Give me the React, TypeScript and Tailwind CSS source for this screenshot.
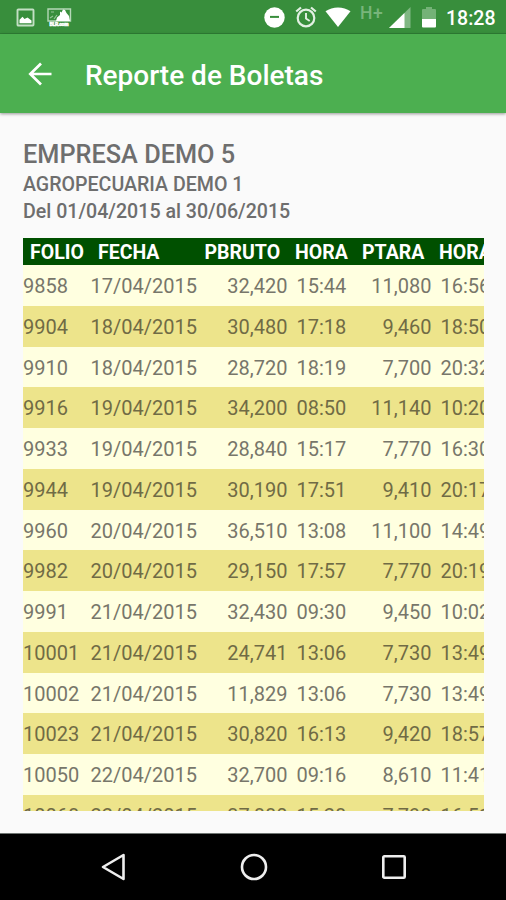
import type { ReactNode } from "react";

type Row = {
  folio: string;
  fecha: string;
  bruto: string;
  horaBruto: string;
  tara: string;
  horaTara: string;
};

const rows: Row[] = [
  { folio: "9858", fecha: "17/04/2015", bruto: "32,420", horaBruto: "15:44", tara: "11,080", horaTara: "16:56" },
  { folio: "9904", fecha: "18/04/2015", bruto: "30,480", horaBruto: "17:18", tara: "9,460", horaTara: "18:50" },
  { folio: "9910", fecha: "18/04/2015", bruto: "28,720", horaBruto: "18:19", tara: "7,700", horaTara: "20:32" },
  { folio: "9916", fecha: "19/04/2015", bruto: "34,200", horaBruto: "08:50", tara: "11,140", horaTara: "10:20" },
  { folio: "9933", fecha: "19/04/2015", bruto: "28,840", horaBruto: "15:17", tara: "7,770", horaTara: "16:30" },
  { folio: "9944", fecha: "19/04/2015", bruto: "30,190", horaBruto: "17:51", tara: "9,410", horaTara: "20:17" },
  { folio: "9960", fecha: "20/04/2015", bruto: "36,510", horaBruto: "13:08", tara: "11,100", horaTara: "14:49" },
  { folio: "9982", fecha: "20/04/2015", bruto: "29,150", horaBruto: "17:57", tara: "7,770", horaTara: "20:19" },
  { folio: "9991", fecha: "21/04/2015", bruto: "32,430", horaBruto: "09:30", tara: "9,450", horaTara: "10:02" },
  { folio: "10001", fecha: "21/04/2015", bruto: "24,741", horaBruto: "13:06", tara: "7,730", horaTara: "13:49" },
  { folio: "10002", fecha: "21/04/2015", bruto: "11,829", horaBruto: "13:06", tara: "7,730", horaTara: "13:49" },
  { folio: "10023", fecha: "21/04/2015", bruto: "30,820", horaBruto: "16:13", tara: "9,420", horaTara: "18:57" },
  { folio: "10050", fecha: "22/04/2015", bruto: "32,700", horaBruto: "09:16", tara: "8,610", horaTara: "11:41" },
  { folio: "10068", fecha: "22/04/2015", bruto: "37,880", horaBruto: "15:28", tara: "7,790", horaTara: "16:51" },
];

function Icon({ className, box, children }: { className: string; box: string; children: ReactNode }) {
  return (
    <svg className={className} viewBox={box} fill="none" aria-hidden="true">
      {children}
    </svg>
  );
}

function StatusBar() {
  return (
    <div className="flex h-[34px] shrink-0 items-start border-b border-[#2f7f35] bg-[#388e3c] text-white">
      {/* notifications */}
      <Icon className="ml-4 mt-2 h-[19px] w-[19px] shrink-0" box="0 0 19 19">
        <rect x="1.5" y="1.5" width="16" height="16" rx="0.8" stroke="#c3dfc4" strokeWidth="1.9" />
        <path d="M3.5 15.3v-3.5l3-3 2 2.200 3-1.500 4 3v2.800z" fill="#fff" />
      </Icon>
      <Icon className="ml-3 mt-2 h-5 w-[25px] shrink-0" box="0 0 25 20">
        <path d="M1 1h22.500v12H1z" stroke="#b5d8b7" strokeWidth="1.4" />
        <path d="M4 4h3M3 10l3-2M7 11l3-4" stroke="#94c496" strokeWidth="1.2" />
        <path d="M9 13l1-3.500 3-2.500V3.500l1.500 1L16 1.500l2 .5 1.500 3L22 8l1 5z" fill="#fff" />
        <text x="2.5" y="18.300" fontSize="5" fontWeight="900" fill="#fff" stroke="#fff" strokeWidth="0.5" textLength="19">
          BLR.com
        </text>
      </Icon>
      <div className="flex-1" />
      {/* do not disturb, alarm, wifi */}
      <Icon className="mt-[7px] h-[21px] w-[21px] shrink-0" box="0 0 21 21">
        <circle cx="10.5" cy="10.5" r="10.2" fill="#fff" />
        <path d="M6 9.900h9" stroke="#388e3c" strokeWidth="2" />
      </Icon>
      <Icon className="ml-[10px] mt-[5px] h-[23px] w-[22px] shrink-0" box="0 0 22 23">
        <circle cx="11" cy="13" r="8.300" stroke="#e2f0e3" strokeWidth="2.2" />
        <path d="M11 8v5.500l3.700 2.500" stroke="#e2f0e3" strokeWidth="1.900" />
        <path d="M1.200 6.500L6 2.500M20.800 6.500L16 2.500" stroke="#e2f0e3" strokeWidth="2.200" />
      </Icon>
      <Icon className="ml-[8px] mt-[7px] h-5 w-[26px] shrink-0" box="0 0 26 20">
        <path d="M.5 4.300C7.500-.9 18.500-.9 25.500 4.300L13 20z" fill="#fff" />
      </Icon>
      <span className="ml-[9px] mt-[4px] w-6 text-[17.500px] font-medium leading-[18px] tracking-[0.5px] text-[#78b57b]">H+</span>
      <Icon className="ml-[5px] mt-[7px] h-[21px] w-[22px] shrink-0" box="0 0 22 21">
        <path d="M21.500 0v21H0z" fill="#80b883" />
        <path d="M15.500 5.900V21H0z" fill="#fff" />
      </Icon>
      <Icon className="ml-[11px] mt-[7px] h-[21px] w-[14px] shrink-0" box="0 0 14 21">
        <path d="M4 0h6v2h3q1 0 1 1v9H0V3q0-1 1-1h3z" fill="#74b277" />
        <path d="M0 12h14v7.500q0 1-1 1H1q-1 0-1-1z" fill="#fff" />
      </Icon>
      <span className="ml-[10px] mr-[10px] mt-[7px] w-[50px] whitespace-nowrap text-[19.500px] font-medium leading-6">18:28</span>
    </div>
  );
}

function AppBar() {
  return (
    <header className="z-10 flex h-[79px] shrink-0 items-center bg-[#4caf50] text-white shadow-[0_1px_3px_rgba(0,0,0,0.4)]">
      <Icon className="ml-7 h-6 w-6 shrink-0" box="0 0 24 24">
        <path d="M23.500 12H2.500M13 1.500L2.300 12 13 22.500" stroke="#fff" strokeWidth="2.700" />
      </Icon>
      <h1 className="ml-[33px] mt-[5px] text-[28px] font-medium leading-8">Reporte de Boletas</h1>
    </header>
  );
}

function BoletasTable() {
  return (
    <div className="mt-[13px] h-[573px] w-[461px] overflow-hidden whitespace-nowrap text-[20px]">
      <div className="flex h-[27px] w-[520px] items-center bg-[#005000] pl-[7px] pt-[2px] text-[19.500px] font-bold text-white">
        <span className="w-[68px]">FOLIO</span>
        <span className="w-[106.500px]">FECHA</span>
        <span className="w-[90.500px]">PBRUTO</span>
        <span className="w-[67px]">HORA</span>
        <span className="w-[77px]">PTARA</span>
        <span>HORA</span>
      </div>
      {rows.map((row) => (
        <div
          key={row.folio}
          className="flex h-[40.750px] w-[520px] items-center pt-[1.500px] even:bg-[#ffffe0] even:text-[#77766a] odd:bg-[#ede48b] odd:text-[#706b45]"
        >
          <span className="w-[67.500px]">{row.folio}</span>
          <span className="w-[107px]">{row.fecha}</span>
          <span className="w-[90px] text-right">{row.bruto}</span>
          <span className="ml-[9px] w-[55px]">{row.horaBruto}</span>
          <span className="w-[80px] text-right">{row.tara}</span>
          <span className="ml-[9px]">{row.horaTara}</span>
        </div>
      ))}
    </div>
  );
}

function NavBar() {
  return (
    <nav className="flex h-[67px] shrink-0 items-center border-t border-[#6f7572] bg-black">
      <Icon className="ml-[101px] h-7 w-6" box="0 0 24 28">
        <path d="M22.500 2v24L2 14z" stroke="#eee" strokeWidth="2.600" strokeLinejoin="round" />
      </Icon>
      <Icon className="ml-[115px] h-7 w-7" box="0 0 28 28">
        <circle cx="14" cy="14" r="12" stroke="#eee" strokeWidth="2.600" />
      </Icon>
      <Icon className="ml-[114px] h-6 w-6" box="0 0 24 24">
        <rect x="1.300" y="1.300" width="21.400" height="21.400" rx="1" stroke="#eee" strokeWidth="2.600" />
      </Icon>
    </nav>
  );
}

export default function App() {
  return (
    <div className="flex h-[900px] w-[506px] flex-col overflow-hidden bg-[#fafafa] font-['Roboto',sans-serif]">
      <StatusBar />
      <AppBar />
      <main className="min-h-0 flex-1 pl-[23px] pt-[26px] text-[#6e6e6e]">
        <h2 className="text-[25.300px] font-medium leading-8">EMPRESA DEMO 5</h2>
        <p className="text-[19.600px] font-medium leading-[27px]">AGROPECUARIA DEMO 1</p>
        <p className="text-[19.600px] font-medium leading-[27px]">Del 01/04/2015 al 30/06/2015</p>
        <BoletasTable />
      </main>
      <NavBar />
    </div>
  );
}
